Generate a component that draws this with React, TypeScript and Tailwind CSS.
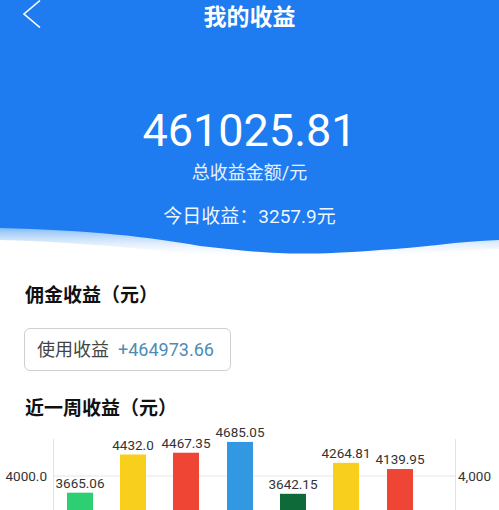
import React from "react";

const FONT = { fontFamily: 'Roboto, "Noto Sans CJK SC", sans-serif' };

const week = [
  { v: 3665.06, c: "#2ecf73", x: 67 },
  { v: 4432.0, c: "#f8cf1d", x: 120, label: "4432.0" },
  { v: 4467.35, c: "#ee4535", x: 173 },
  { v: 4685.05, c: "#3298e2", x: 227 },
  { v: 3642.15, c: "#0f6a39", x: 280 },
  { v: 4264.81, c: "#f8cf1d", x: 333 },
  { v: 4139.95, c: "#ee4535", x: 387 },
];

// page y of the 4000 gridline, relative to the chart top (422)
const baseY = 55;
const toY = (v: number) => baseY - (v - 4000) / 20.1;

function WeekChart() {
  return (
    <svg width="499" height="100" viewBox="0 0 499 100" className="block">
      <line x1="53.5" y1="18" x2="53.5" y2="100" stroke="#e3e3e3" />
      <line x1="455.5" y1="18" x2="455.5" y2="100" stroke="#e3e3e3" />
      <line x1="53" y1={baseY} x2="456" y2={baseY} stroke="#e6e6e6" />
      <text x="47" y="60" textAnchor="end" fontSize="13.5" fill="#333" style={FONT}>
        4000.0
      </text>
      <text x="458" y="60" fontSize="13.5" fill="#333" style={FONT}>
        4,000
      </text>
      {week.map((b) => {
        const top = toY(b.v);
        return (
          <g key={b.x}>
            <rect x={b.x} y={top} width="26" height={100 - top} fill={b.c} />
            <text
              x={b.x + 13}
              y={top - 5}
              textAnchor="middle"
              fontSize="13.5"
              fill="#333"
              style={FONT}
            >
              {b.label ?? b.v.toFixed(2)}
            </text>
          </g>
        );
      })}
    </svg>
  );
}

function Wave() {
  return (
    <svg width="499" height="34" viewBox="0 0 499 34" className="block w-full" preserveAspectRatio="none">
      <defs>
        <linearGradient id="shade" x1="0" y1="0" x2="0" y2="1">
          <stop offset="0%" stopColor="#7ab6f4" />
          <stop offset="100%" stopColor="#ffffff" stopOpacity="0" />
        </linearGradient>
      </defs>
      <path d="M0,0 H499 V22 C430,25 360,31 300,32 C220,33 120,16 0,13 Z" fill="url(#shade)" />
      <path d="M0,0 H499 V13 C460,14 420,21 380,23 C340,26 315,27 290,26.5 C260,26 230,22 200,19 C150,10 90,3 0,1 Z" fill="#1e7bf0" />
    </svg>
  );
}

export default function App() {
  return (
    <div className="w-[499px] bg-white overflow-hidden" style={FONT}>
      {/* header */}
      <div className="bg-[#1e7bf0] text-white">
        <div className="relative h-[34px] flex items-center justify-center">
          <svg className="absolute left-[22px] top-0" width="20" height="28" viewBox="0 0 20 28">
            <path d="M18 0.5 L2 14 L18 27.5" fill="none" stroke="#fff" strokeWidth="1.6" />
          </svg>
          <h1 className="text-[23px] font-bold leading-none">我的收益</h1>
        </div>
        <div className="mt-[74px] text-center text-[45px] leading-[45px]">461025.81</div>
        <div className="mt-[9px] text-center text-[18px] leading-[22px] text-white/90">总收益金额/元</div>
        <div className="mt-[23px] text-center text-[19px] leading-[20px] text-white/95">今日收益：3257.9元</div>
      </div>
      <Wave />

      {/* commission */}
      <div className="px-[24px]">
        <h2 className="mt-[23px] pl-[1px] text-[19px] leading-[24px] font-bold text-[#111]">佣金收益（元）</h2>
        <div className="mt-[20px] inline-flex items-center gap-[9px] h-[43px] w-[207px] px-[12px] border border-[#cfcfcf] rounded-[6px] text-[18px]">
          <span className="text-[#444]">使用收益</span>
          <span className="text-[#4b8db6]">+464973.66</span>
        </div>
        <h2 className="mt-[26px] pl-[1px] text-[19px] leading-[24px] font-bold text-[#111]">近一周收益（元）</h2>
      </div>
      <WeekChart />
    </div>
  );
}
